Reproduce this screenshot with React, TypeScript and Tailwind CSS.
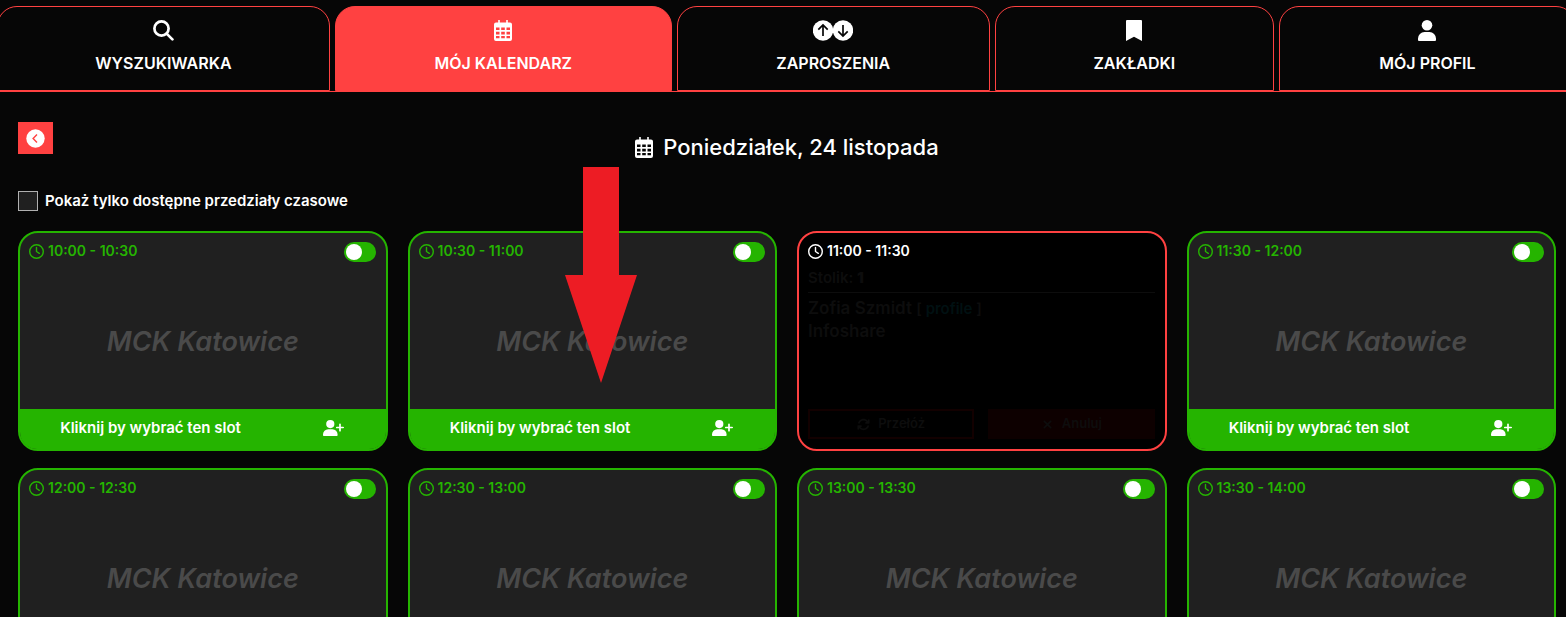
import { useState } from "react";
import { FaArrowsRotate, FaRegClock, FaXmark } from "react-icons/fa6";

function SearchIcon() {
  return (
    <svg className="h-[21px] w-[21px]" viewBox="0 0 21 21" fill="none" stroke="currentColor" strokeWidth="2.7">
      <circle cx="8.5" cy="8.5" r="7.1" />
      <path d="M13.6 13.6l5.8 5.8" strokeLinecap="round" />
    </svg>
  );
}

function CalendarIcon() {
  return (
    <svg className="h-[21px] w-[18px]" viewBox="0 0 18 21" fill="currentColor" fillRule="evenodd">
      <path d="M4.2 0h1.6v2.5h6.4V0h1.6v2.5H16a2 2 0 0 1 2 2V19a2 2 0 0 1-2 2H2a2 2 0 0 1-2-2V4.5a2 2 0 0 1 2-2h2.2zM2 7.5v2.5h3.5V7.5zm5.2 0v2.5h3.6V7.5zm5.3 0v2.5H16V7.5zM2 11.8v2.6h3.5v-2.6zm5.2 0v2.6h3.6v-2.6zm5.3 0v2.6H16v-2.6zM2 16.1v2.2h3.5v-2.2zm5.2 0v2.2h3.6v-2.2zm5.3 0v2.2H16v-2.2z" />
    </svg>
  );
}

function CircleArrow({ down = false }: { down?: boolean }) {
  return (
    <svg className="h-[21px] w-5" viewBox="0 0 20 21" fill="none">
      <circle cx="10" cy="10.5" r="10.2" fill="currentColor" />
      <path
        d={down ? "M10 5v10.8M5.3 11.3l4.7 4.7 4.7-4.7" : "M10 16V5.2M5.3 9.7L10 5l4.7 4.7"}
        stroke="#060606"
        strokeWidth="1.7"
      />
    </svg>
  );
}

function BookmarkIcon() {
  return (
    <svg className="h-[21px] w-4" viewBox="0 0 16 21" fill="currentColor">
      <path d="M1 0h14a1 1 0 0 1 1 1v20l-8-4.3L0 21V1a1 1 0 0 1 1-1z" />
    </svg>
  );
}

function UserIcon() {
  return (
    <svg className="h-[21px] w-[18px]" viewBox="0 0 18 21" fill="currentColor">
      <circle cx="9" cy="5.3" r="5.3" />
      <path d="M6.5 12h5a6.5 6.5 0 0 1 6.5 6.5V20a1 1 0 0 1-1 1H1a1 1 0 0 1-1-1v-1.5A6.5 6.5 0 0 1 6.5 12z" />
    </svg>
  );
}

function UserPlusIcon() {
  return (
    <svg className="h-4 w-[21px]" viewBox="0 0 21 16" fill="currentColor">
      <circle cx="7.3" cy="4.1" r="4.1" />
      <path d="M5.2 9.3h4.2a5.2 5.2 0 0 1 5.2 5.2v.7a.8.8 0 0 1-.8.8H.8a.8.8 0 0 1-.8-.8v-.7a5.2 5.2 0 0 1 5.2-5.2z" />
      <path d="M17 4.3v6.4M13.8 7.5h6.4" stroke="currentColor" strokeWidth="1.7" strokeLinecap="round" />
    </svg>
  );
}

function BackIcon() {
  return (
    <svg className="size-[19px]" viewBox="0 0 19 19" fill="none">
      <circle cx="9.5" cy="9.5" r="9.2" fill="#fff" />
      <path d="M11 5.6L7.1 9.5l3.9 3.9" stroke="#ff4141" strokeWidth="1.4" />
    </svg>
  );
}

const tabs = [
  { label: "WYSZUKIWARKA", grow: "flex-[333]", icon: <SearchIcon /> },
  { label: "MÓJ KALENDARZ", grow: "flex-[337]", icon: <CalendarIcon />, active: true },
  {
    label: "ZAPROSZENIA",
    grow: "flex-[313]",
    icon: (
      <>
        <CircleArrow />
        <CircleArrow down />
      </>
    ),
  },
  { label: "ZAKŁADKI", grow: "flex-[279]", icon: <BookmarkIcon /> },
  { label: "MÓJ PROFIL", grow: "flex-[297]", icon: <UserIcon /> },
];

const slots = [
  { time: "10:00 - 10:30" },
  { time: "10:30 - 11:00" },
  { time: "11:00 - 11:30", meeting: { table: 1, name: "Zofia Szmidt", company: "Infoshare" } },
  { time: "11:30 - 12:00" },
  { time: "12:00 - 12:30" },
  { time: "12:30 - 13:00" },
  { time: "13:00 - 13:30" },
  { time: "13:30 - 14:00" },
];

function Tabs() {
  return (
    <div className="overflow-hidden">
      <nav className="-ml-[3px] -mr-[10px] flex gap-[5px] border-b border-[#ff4141] pt-1.5">
        {tabs.map((tab) => (
          <a
            key={tab.label}
            href="#"
            className={`${tab.grow} flex h-[85px] min-w-0 flex-col items-center gap-2.5 rounded-t-[20px] border border-[#ff4141] pt-[13px] ${
              tab.active ? "bg-[#ff4141]" : ""
            }`}
          >
            <span className="flex">{tab.icon}</span>
            <span className="text-base font-semibold">{tab.label}</span>
          </a>
        ))}
      </nav>
    </div>
  );
}

function FreeSlot({ time }: { time: string }) {
  const [blocked, setBlocked] = useState(false);

  return (
    <article className="flex h-[220px] flex-col rounded-[20px] border-2 border-[#25b400] bg-[#202020]">
      <div className="flex items-start justify-between pl-[9px] pr-2.5 pt-2">
        <span className="flex items-center gap-1 text-sm font-semibold text-[#25b400]">
          <FaRegClock className="text-[15px]" />
          {time}
        </span>
        <input
          type="checkbox"
          role="switch"
          aria-label={`Dostępność ${time}`}
          checked={blocked}
          onChange={(e) => setBlocked(e.target.checked)}
          className="mt-px h-5 w-8 cursor-pointer appearance-none rounded-full bg-[#25b400] p-0.5 before:block before:size-4 before:rounded-full before:bg-white checked:bg-[#555] checked:before:translate-x-3"
        />
      </div>
      <p className="mb-auto mt-[62px] text-center text-[27px] leading-9 font-semibold italic text-[#4a4a4a]">
        MCK Katowice
      </p>
      <button className="grid h-10 cursor-pointer grid-cols-[5fr_2fr] items-center justify-items-center rounded-b-[17px] bg-[#25b400] pb-0.5 text-[15px] font-semibold">
        <span>Kliknij by wybrać ten slot</span>
        <UserPlusIcon />
      </button>
    </article>
  );
}

function BookedSlot({ time, meeting }: { time: string; meeting: { table: number; name: string; company: string } }) {
  return (
    <article className="flex h-[220px] flex-col rounded-[20px] border-2 border-[#ff4141] bg-black pb-2.5 pl-[9px] pr-2.5 pt-2">
      <span className="flex items-center gap-1 text-sm font-semibold">
        <FaRegClock className="text-[15px]" />
        {time}
      </span>
      <div className="flex flex-1 flex-col text-[#0d0d0d]">
        <p className="border-b border-[#0d0d0d] pb-1 pt-[7px] text-[15px] leading-5 font-semibold">
          Stolik: <b>{meeting.table}</b>
        </p>
        <p className="pt-1 text-[17px] leading-[23px] font-semibold">
          {meeting.name}{" "}
          <span className="text-[15px]">
            [{" "}
            <a href="#" className="text-[#001012]">
              profile
            </a>{" "}
            ]
          </span>
        </p>
        <p className="text-[17px] leading-[23px] font-semibold">{meeting.company}</p>
        <div className="mt-auto grid grid-cols-2 gap-3.5 text-[13px] font-semibold">
          <button className="flex h-[30px] items-center justify-center gap-2 border-2 border-[#120000]">
            <FaArrowsRotate />
            Przełóż
          </button>
          <button className="flex h-[30px] items-center justify-center gap-2 bg-[#0d0000]">
            <FaXmark />
            Anuluj
          </button>
        </div>
      </div>
    </article>
  );
}

export default function App() {
  const [onlyFree, setOnlyFree] = useState(false);
  const visible = slots.filter((slot) => !onlyFree || !slot.meeting);

  return (
    <div className="relative h-screen overflow-hidden bg-[#060606] font-['Inter',sans-serif] text-white">
      <Tabs />

      <main className="pl-[18px] pr-2.5 pt-[30px]">
        <button aria-label="Wstecz" className="flex h-8 w-[35px] cursor-pointer items-center justify-center bg-[#ff4141]">
          <BackIcon />
        </button>

        <h1 className="-mt-[21px] flex items-center justify-center gap-2.5 text-[22px] leading-7 font-medium">
          <CalendarIcon />
          Poniedziałek, 24 listopada
        </h1>

        <label className="mt-[30px] flex h-5 w-fit items-center gap-[7px] text-[15px] font-semibold">
          <input
            type="checkbox"
            checked={onlyFree}
            onChange={(e) => setOnlyFree(e.target.checked)}
            className="size-5 appearance-none border border-[#b0b0b0] bg-[#202020] checked:bg-[#25b400]"
          />
          Pokaż tylko dostępne przedziały czasowe
        </label>

        <section className="mt-5 grid grid-cols-4 gap-x-5 gap-y-[17px]">
          {visible.map((slot) =>
            slot.meeting ? (
              <BookedSlot key={slot.time} time={slot.time} meeting={slot.meeting} />
            ) : (
              <FreeSlot key={slot.time} time={slot.time} />
            )
          )}
        </section>
      </main>

      {/* Pointer to the slot button */}
      <svg
        className="pointer-events-none absolute left-[565px] top-[167px] h-[216px] w-[72px]"
        viewBox="0 0 72 216"
        fill="#ed1c24"
      >
        <path d="M18 0h36v108h18L36 216 0 108h18z" />
      </svg>
    </div>
  );
}
